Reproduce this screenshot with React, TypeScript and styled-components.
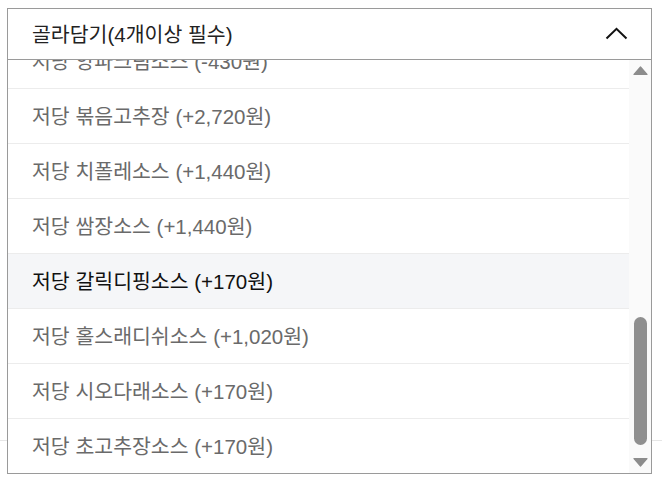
import React from 'react';
import styled, { createGlobalStyle } from 'styled-components';

const GlobalStyle = createGlobalStyle`
  html, body {
    margin: 0;
    padding: 0;
    background: #ffffff;
    font-family: "Liberation Sans", "Noto Sans CJK KR", Arial, sans-serif;
  }
`;

const Page = styled.div`
  position: relative;
  width: 662px;
  height: 484px;
  overflow: hidden;
`;

const BackdropRow = styled.div`
  margin-top: 440px;
  border-top: 1px solid #e6e6e6;
`;

const Dropdown = styled.div`
  position: absolute;
  top: 8px;
  left: 7px;
  width: 645px;
  height: 466px;
  box-sizing: border-box;
  border: 1px solid #9a9a9a;
  background: #ffffff;
  display: flex;
  flex-direction: column;
`;

const Header = styled.div`
  height: 51px;
  flex-shrink: 0;
  box-sizing: border-box;
  display: flex;
  align-items: center;
  justify-content: space-between;
  padding: 0 23px 2px 24px;
  border-bottom: 1px solid #9a9a9a;
  font-size: 20.5px;
  color: #222222;
`;

const Body = styled.div`
  flex: 1;
  min-height: 0;
  display: flex;
`;

const Viewport = styled.div`
  flex: 1;
  overflow: hidden;
`;

const List = styled.ul<{ $offset: number }>`
  list-style: none;
  margin: ${({ $offset }) => -$offset}px 0 0;
  padding: 0;
`;

const Option = styled.li<{ $active?: boolean }>`
  height: 55px;
  box-sizing: border-box;
  display: flex;
  align-items: center;
  padding: 0 0 3px 24px;
  border-bottom: 1px solid #ececec;
  font-size: 20.5px;
  color: ${({ $active }) => ($active ? '#111111' : '#6a6a6a')};
  background: ${({ $active }) => ($active ? '#f5f6f8' : '#ffffff')};
`;

const Scrollbar = styled.div`
  width: 22px;
  flex-shrink: 0;
  background: #fafafa;
  display: flex;
  flex-direction: column;
`;

const ArrowButton = styled.div`
  height: 22px;
  flex-shrink: 0;
  display: flex;
  align-items: center;
  justify-content: center;
  padding-left: 1px;
`;

const Track = styled.div`
  flex: 1;
  display: flex;
  flex-direction: column;
  align-items: center;
  padding-left: 1px;
`;

const Thumb = styled.div<{ $top: number; $height: number }>`
  margin-top: ${({ $top }) => $top}px;
  width: 13px;
  height: ${({ $height }) => $height}px;
  border-radius: 7px;
  background: #8f8f8f;
`;

const options = [
  { label: '저당 양파크림소스 (-430원)' },
  { label: '저당 볶음고추장 (+2,720원)' },
  { label: '저당 치폴레소스 (+1,440원)' },
  { label: '저당 쌈장소스 (+1,440원)' },
  { label: '저당 갈릭디핑소스 (+170원)', active: true },
  { label: '저당 홀스래디쉬소스 (+1,020원)' },
  { label: '저당 시오다래소스 (+170원)' },
  { label: '저당 초고추장소스 (+170원)' },
];

const ChevronUp = () => (
  <svg width="23" height="13" viewBox="0 0 23 13" fill="none">
    <path d="M1.5 11.5 L11.5 1.8 L21.5 11.5" stroke="#111" strokeWidth="2" />
  </svg>
);

const Triangle = ({ down }: { down?: boolean }) => (
  <svg width="15" height="10" viewBox="0 0 15 10">
    <path
      d={down ? 'M1 1.5 L14 1.5 L7.5 9 Z' : 'M1 8.5 L14 8.5 L7.5 1 Z'}
      fill="#8c8c8c"
      stroke="#8c8c8c"
      strokeWidth="1.2"
      strokeLinejoin="round"
    />
  </svg>
);

const App = () => {
  return (
    <Page>
      <GlobalStyle />
      <BackdropRow />
      <Dropdown>
        <Header>
          <span>골라담기(4개이상 필수)</span>
          <ChevronUp />
        </Header>
        <Body>
          <Viewport>
            <List $offset={26}>
              {options.map((o) => (
                <Option key={o.label} $active={o.active}>
                  {o.label}
                </Option>
              ))}
            </List>
          </Viewport>
          <Scrollbar>
            <ArrowButton>
              <Triangle />
            </ArrowButton>
            <Track>
              <Thumb $top={235} $height={128} />
            </Track>
            <ArrowButton>
              <Triangle down />
            </ArrowButton>
          </Scrollbar>
        </Body>
      </Dropdown>
    </Page>
  );
};

export default App;
